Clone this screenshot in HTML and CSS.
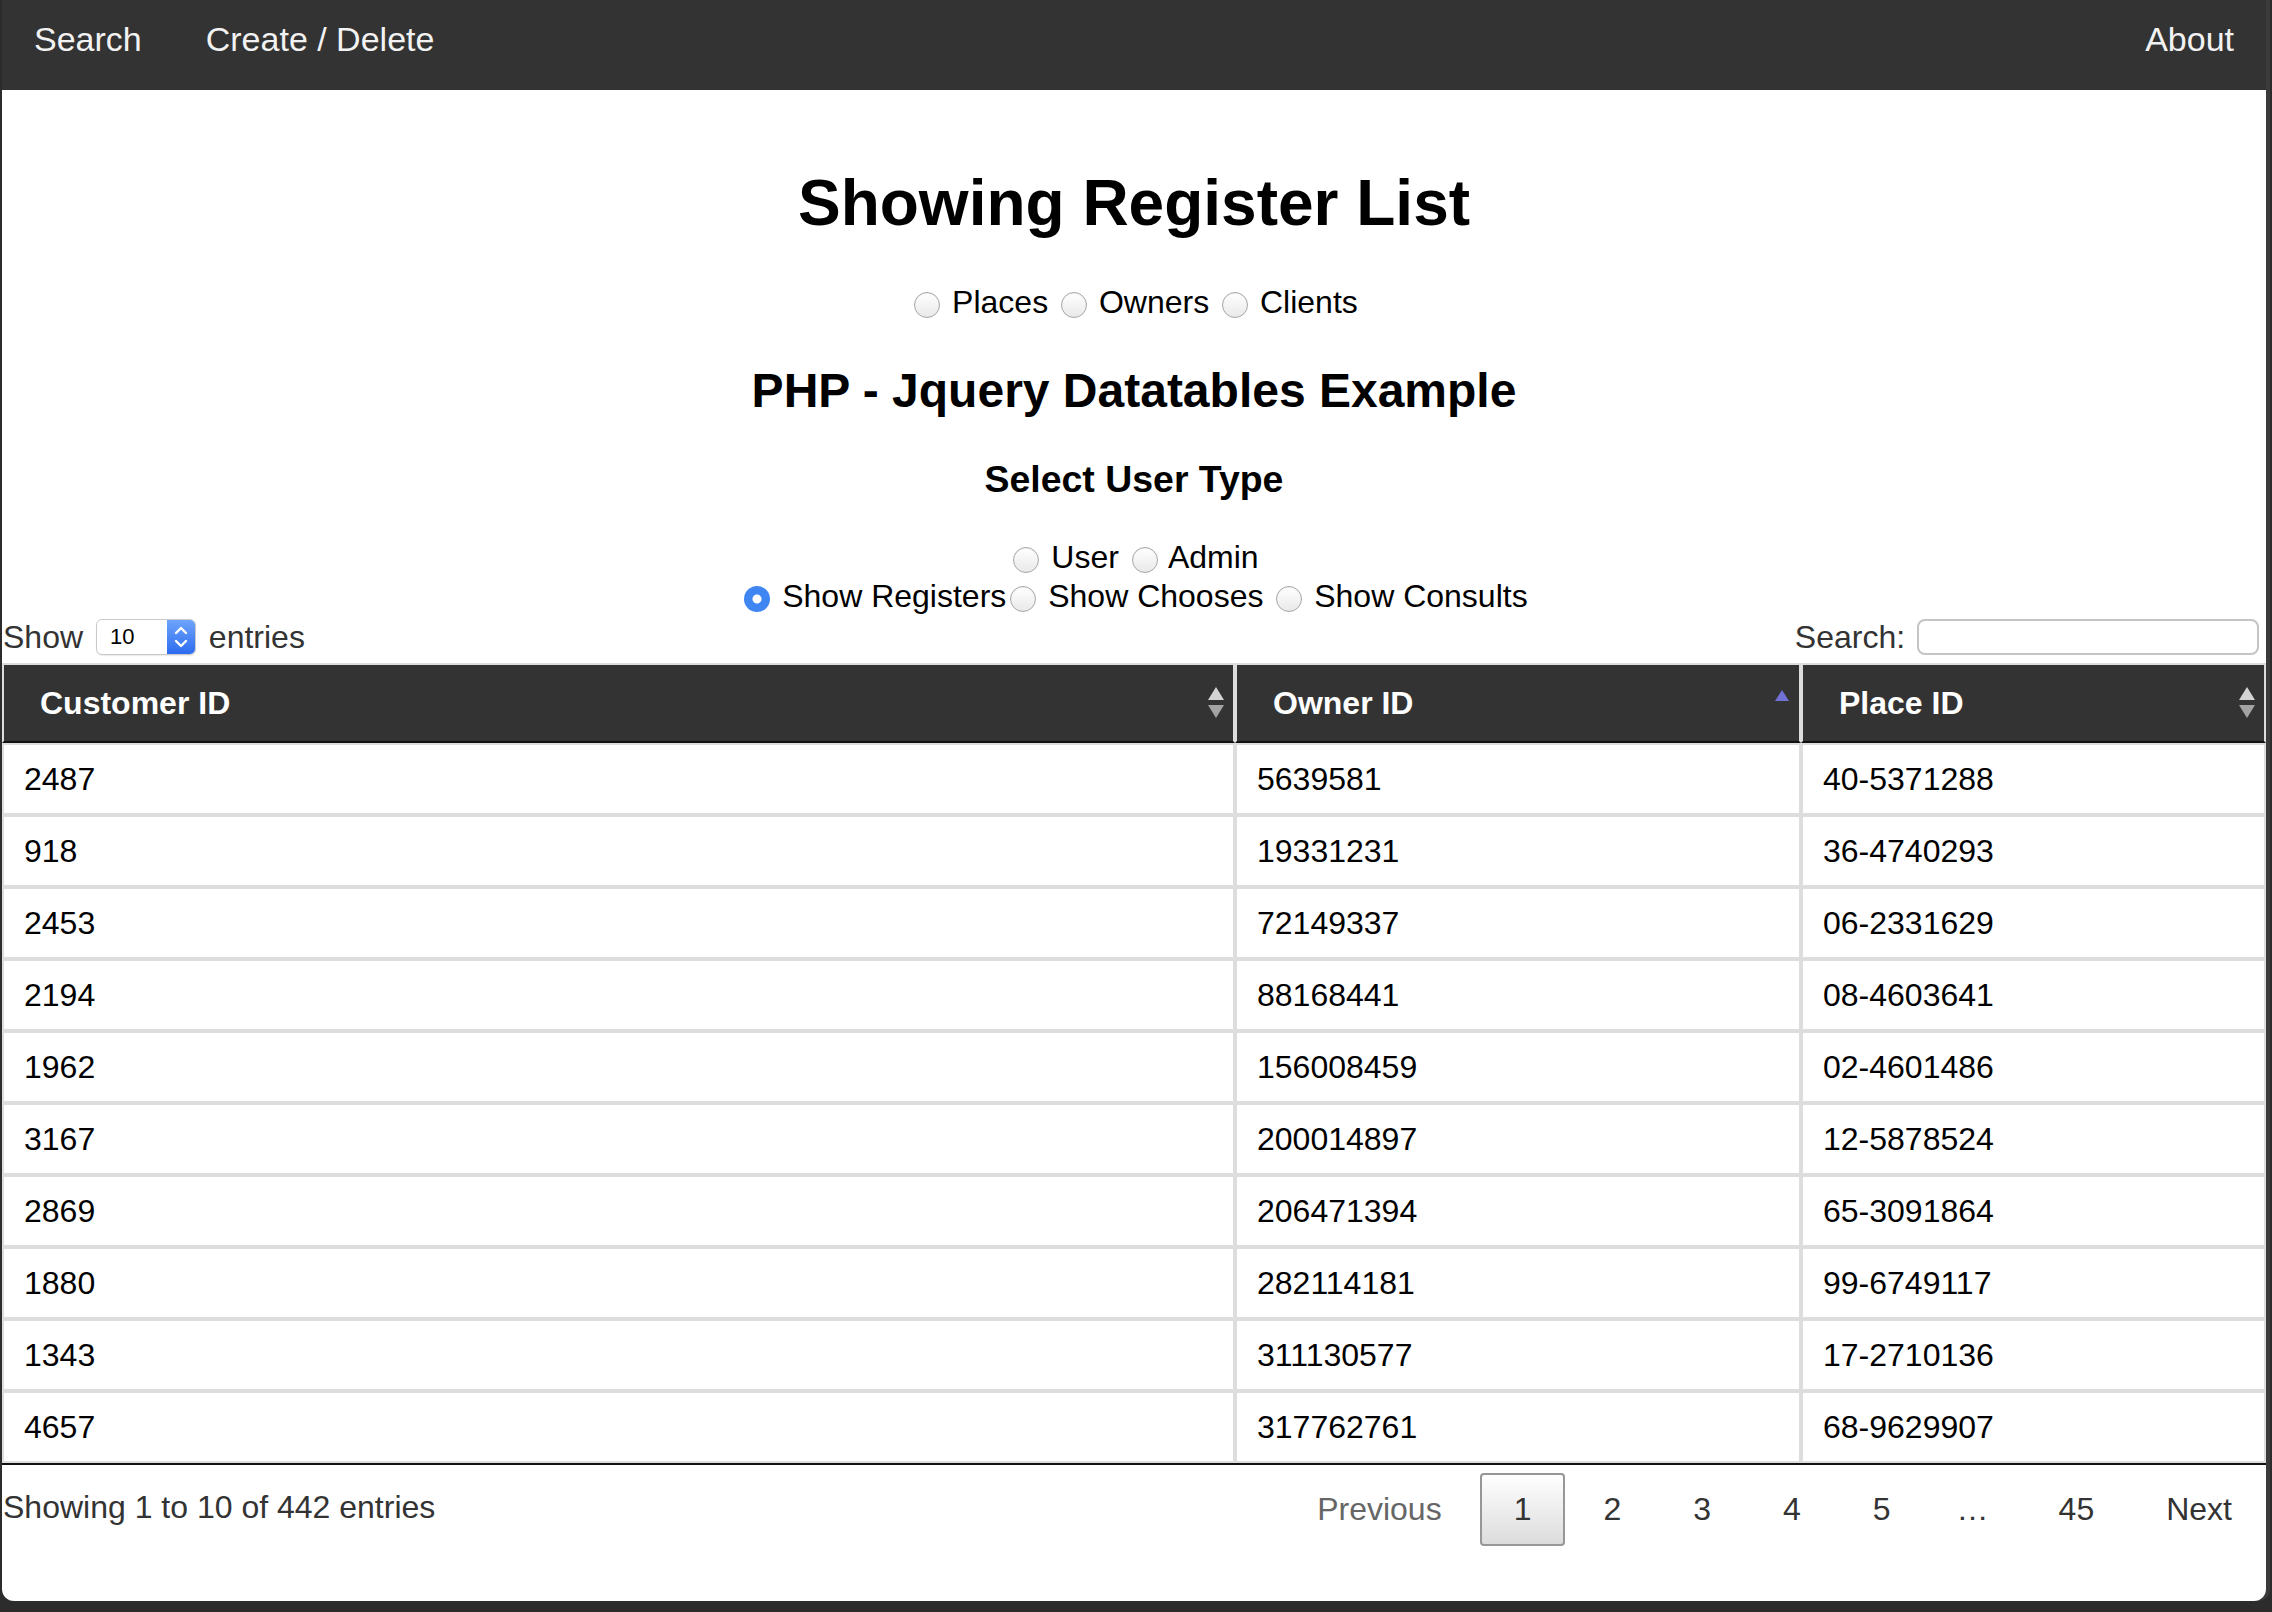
FILE: index.html
```html
<!DOCTYPE html>
<html>
<head>
<meta charset="utf-8">
<title>Showing Register List</title>
<link rel="stylesheet" href="styles.css">
</head>
<body>
<div class="window">
  <nav class="topnav">
    <a href="#" class="nav-link">Search</a>
    <a href="#" class="nav-link">Create / Delete</a>
    <a href="#" class="nav-link nav-right">About</a>
  </nav>
  <main class="content">
    <h1 class="title">Showing Register List</h1>
    <div class="radio-row row-list"><input type="radio" name="list" class="radio"> Places <input type="radio" name="list" class="radio"> Owners <input type="radio" name="list" class="radio"> Clients</div>
    <h2 class="subtitle">PHP - Jquery Datatables Example</h2>
    <h3 class="section">Select User Type</h3>
    <div class="radio-row row-user"><input type="radio" name="utype" class="radio"> User <input type="radio" name="utype" class="radio"> Admin</div>
    <div class="radio-row row-show"><input type="radio" name="show" class="radio" checked> Show Registers<input type="radio" name="show" class="radio"> Show Chooses <input type="radio" name="show" class="radio"> Show Consults</div>

    <div class="dt-top">
      <div class="dt-length">Show <span class="mac-select"><span class="mac-select-value">10</span><span class="mac-select-btn"><svg width="28" height="34" viewBox="0 0 28 34"><path d="M9 13 L14 8 L19 13" fill="none" stroke="#fff" stroke-width="2.4" stroke-linecap="round" stroke-linejoin="round"/><path d="M9 21 L14 26 L19 21" fill="none" stroke="#fff" stroke-width="2.4" stroke-linecap="round" stroke-linejoin="round"/></svg></span></span> entries</div>
      <div class="dt-filter">Search: <span class="search-box"></span></div>
    </div>

    <table class="dt">
      <thead>
        <tr>
          <th class="c1"><div class="th-in"><span>Customer ID</span><svg class="sort" width="18" height="34" viewBox="0 0 18 34"><path d="M9 1 L17 14 L1 14 Z" fill="#d4d4d4"/><path d="M1 19 L17 19 L9 32 Z" fill="#a3a3a3"/></svg></div></th>
          <th class="c2"><div class="th-in"><span>Owner ID</span><svg class="sort" width="18" height="34" viewBox="0 0 18 34"><path d="M9 4 L16 15 L2 15 Z" fill="#7272d6"/></svg></div></th>
          <th class="c3"><div class="th-in"><span>Place ID</span><svg class="sort" width="18" height="34" viewBox="0 0 18 34"><path d="M9 1 L17 14 L1 14 Z" fill="#d4d4d4"/><path d="M1 19 L17 19 L9 32 Z" fill="#a3a3a3"/></svg></div></th>
        </tr>
      </thead>
      <tbody>
        <tr><td>2487</td><td>5639581</td><td>40-5371288</td></tr>
        <tr><td>918</td><td>19331231</td><td>36-4740293</td></tr>
        <tr><td>2453</td><td>72149337</td><td>06-2331629</td></tr>
        <tr><td>2194</td><td>88168441</td><td>08-4603641</td></tr>
        <tr><td>1962</td><td>156008459</td><td>02-4601486</td></tr>
        <tr><td>3167</td><td>200014897</td><td>12-5878524</td></tr>
        <tr><td>2869</td><td>206471394</td><td>65-3091864</td></tr>
        <tr><td>1880</td><td>282114181</td><td>99-6749117</td></tr>
        <tr><td>1343</td><td>311130577</td><td>17-2710136</td></tr>
        <tr><td>4657</td><td>317762761</td><td>68-9629907</td></tr>
      </tbody>
    </table>

    <div class="dt-bottom">
      <div class="dt-info">Showing 1 to 10 of 442 entries</div>
      <div class="dt-paginate">
        <a class="pg pg-disabled">Previous</a>
        <a class="pg pg-current">1</a>
        <a class="pg">2</a>
        <a class="pg">3</a>
        <a class="pg">4</a>
        <a class="pg">5</a>
        <span class="pg-ellipsis">…</span>
        <a class="pg">45</a>
        <a class="pg">Next</a>
      </div>
    </div>
  </main>
</div>
</body>
</html>
```

FILE: styles.css
```css
html, body {
  margin: 0;
  padding: 0;
}
body {
  background: #2c2c2c;
  width: 2272px;
  height: 1612px;
  overflow: hidden;
  font-family: "Liberation Sans", Arial, Helvetica, sans-serif;
  font-size: 32px;
  color: #000;
}
.window {
  margin-left: 2px;
  width: 2264px;
  height: 1601px;
  background: #fff;
  border-radius: 0 0 12px 12px;
  overflow: hidden;
  box-shadow: 4px 0 0 #3b3b3b;
}

/* nav */
.topnav {
  display: flex;
  height: 90px;
  background: #333;
}
.nav-link {
  display: block;
  padding: 0 32px;
  line-height: 78px;
  font-size: 34px;
  color: #f2f2f2;
  text-decoration: none;
}
.nav-right {
  margin-left: auto;
}

/* headings */
.content {
  text-align: center;
}
.title {
  font-size: 64px;
  line-height: 74px;
  margin: 76px 0 44px;
}
.subtitle {
  font-size: 48px;
  line-height: 55px;
  margin: 42px 0 40px;
}
.section {
  font-size: 37.44px;
  line-height: 43px;
  margin: 40px 0 37px;
}
.radio-row {
  line-height: 39px;
  white-space: pre;
}
.row-list {
  line-height: 37px;
}
.radio {
  -webkit-appearance: none;
  appearance: none;
  width: 26px;
  height: 26px;
  margin: 0 3px 0 4px;
  border-radius: 50%;
  border: 1px solid #a6a6a6;
  background: linear-gradient(#ffffff, #e9e9e9);
  box-shadow: inset 0 1px 1px rgba(0,0,0,0.05);
  vertical-align: -5px;
  box-sizing: border-box;
}
.radio:checked {
  border: none;
  box-shadow: none;
  background: radial-gradient(circle, #fff 0 4px, #3f86f2 5px);
}

/* datatables top */
.dt-top {
  display: flex;
  justify-content: space-between;
  align-items: center;
  height: 40px;
  margin-top: 1px;
  color: #333;
  text-align: left;
}
.dt-length {
  padding-left: 1px;
  display: flex;
  align-items: center;
  white-space: pre;
}
.mac-select {
  display: inline-flex;
  width: 100px;
  height: 36px;
  margin: 0 4px;
  border: 1px solid #c9c9c9;
  border-radius: 6px;
  box-sizing: border-box;
  overflow: hidden;
  background: #fff;
  box-shadow: 0 1px 1px rgba(0,0,0,0.08);
}
.mac-select-value {
  flex: 1;
  font-size: 22px;
  line-height: 34px;
  padding-left: 13px;
  color: #000;
}
.mac-select-btn {
  width: 28px;
  background: linear-gradient(#6ea4fa, #2d6cf0);
  display: flex;
  align-items: center;
  justify-content: center;
}
.dt-filter {
  display: flex;
  align-items: center;
  margin-right: 7px;
  white-space: pre;
}
.search-box {
  width: 342px;
  height: 36px;
  margin-left: 3px;
  border: 2px solid #c4c4c4;
  border-radius: 8px;
  box-sizing: border-box;
  background: #fff;
}

/* table */
.dt {
  width: 2264px;
  margin-top: 6px;
  border-collapse: separate;
  border-spacing: 0;
  table-layout: fixed;
  text-align: left;
}
.dt th, .dt td {
  box-sizing: border-box;
}
.c1 { width: 1233px; }
.c2 { width: 566px; }
.c3 { width: 465px; }
.dt th {
  background: #333;
  color: #fff;
  font-weight: bold;
  font-size: 32px;
  line-height: 36px;
  padding: 20px 8px 20px 36px;
  border-top: 2px solid #ddd;
  border-left: 2px solid #ddd;
  border-right: 2px solid #ddd;
  border-bottom: 2px solid #111;
}
.th-in {
  display: flex;
  justify-content: space-between;
  align-items: center;
}
.sort {
  display: block;
}
.dt td {
  padding: 16px 20px;
  line-height: 36px;
  border: 2px solid #ddd;
  color: #000;
}
.dt tbody tr:last-child td {
  border-bottom: 2px solid #ddd;
  box-shadow: 0 2px 0 #111;
}

/* bottom */
.dt-bottom {
  display: flex;
  justify-content: space-between;
  align-items: flex-start;
  margin-top: 2px;
  color: #333;
  text-align: left;
}
.dt-info {
  padding-top: 24px;
  line-height: 37px;
  padding-left: 1px;
}
.dt-paginate {
  padding-top: 8px;
  display: flex;
  align-items: center;
}
.pg {
  display: block;
  padding: 16px 32px;
  margin-left: 4px;
  line-height: 37px;
  border: 2px solid transparent;
  border-radius: 4px;
  color: #333;
  text-align: center;
}
.pg-disabled {
  color: #666;
}
.pg-current {
  border: 2px solid #979797;
  background: linear-gradient(#ffffff, #dcdcdc);
}
.pg-ellipsis {
  padding: 0 32px;
  color: #333;
}
```
